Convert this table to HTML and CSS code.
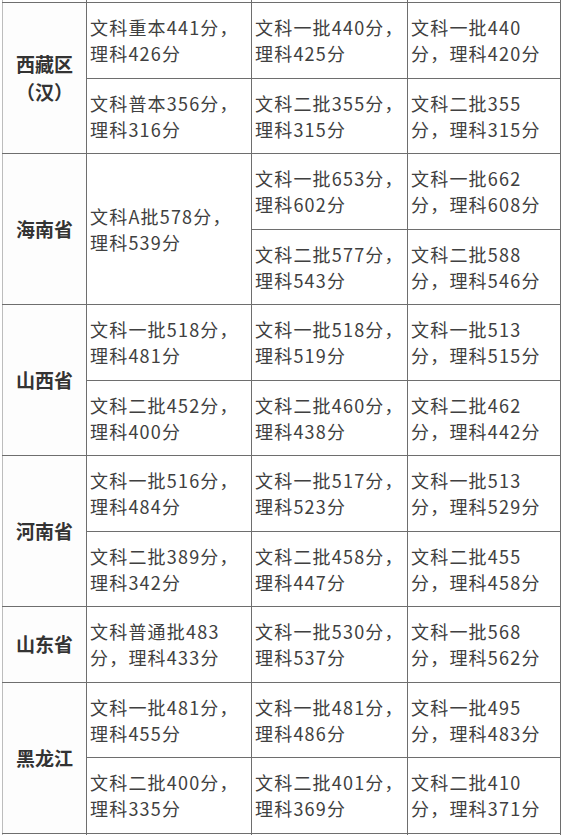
FILE: index.html
```html
<!DOCTYPE html>
<html lang="zh-CN">
<head>
<meta charset="utf-8">
<title>分数线</title>
<link rel="stylesheet" href="styles.css">
</head>
<body>
<table class="score">
  <colgroup>
    <col class="c1"><col class="c2"><col class="c3"><col class="c4">
  </colgroup>
  <tbody>
    <tr class="cut top"><td></td><td></td><td></td><td></td></tr>

    <tr class="r">
      <td class="p" rowspan="2">西藏区<br><span class="cm">（</span>汉<span class="cm">）</span></td>
      <td>文科重本441分<span class="cm">，</span><br>理科426分</td>
      <td>文科一批440分<span class="cm">，</span><br>理科425分</td>
      <td>文科一批440<br>分<span class="cm">，</span>理科420分</td>
    </tr>
    <tr class="r">
      <td>文科普本356分<span class="cm">，</span><br>理科316分</td>
      <td>文科二批355分<span class="cm">，</span><br>理科315分</td>
      <td>文科二批355<br>分<span class="cm">，</span>理科315分</td>
    </tr>

    <tr class="r">
      <td class="p" rowspan="2">海南省</td>
      <td rowspan="2">文科A批578分<span class="cm">，</span><br>理科539分</td>
      <td>文科一批653分<span class="cm">，</span><br>理科602分</td>
      <td>文科一批662<br>分<span class="cm">，</span>理科608分</td>
    </tr>
    <tr class="r">
      <td>文科二批577分<span class="cm">，</span><br>理科543分</td>
      <td>文科二批588<br>分<span class="cm">，</span>理科546分</td>
    </tr>

    <tr class="r">
      <td class="p" rowspan="2">山西省</td>
      <td>文科一批518分<span class="cm">，</span><br>理科481分</td>
      <td>文科一批518分<span class="cm">，</span><br>理科519分</td>
      <td>文科一批513<br>分<span class="cm">，</span>理科515分</td>
    </tr>
    <tr class="r">
      <td>文科二批452分<span class="cm">，</span><br>理科400分</td>
      <td>文科二批460分<span class="cm">，</span><br>理科438分</td>
      <td>文科二批462<br>分<span class="cm">，</span>理科442分</td>
    </tr>

    <tr class="r">
      <td class="p" rowspan="2">河南省</td>
      <td>文科一批516分<span class="cm">，</span><br>理科484分</td>
      <td>文科一批517分<span class="cm">，</span><br>理科523分</td>
      <td>文科一批513<br>分<span class="cm">，</span>理科529分</td>
    </tr>
    <tr class="r">
      <td>文科二批389分<span class="cm">，</span><br>理科342分</td>
      <td>文科二批458分<span class="cm">，</span><br>理科447分</td>
      <td>文科二批455<br>分<span class="cm">，</span>理科458分</td>
    </tr>

    <tr class="r">
      <td class="p">山东省</td>
      <td>文科普通批483<br>分<span class="cm">，</span>理科433分</td>
      <td>文科一批530分<span class="cm">，</span><br>理科537分</td>
      <td>文科一批568<br>分<span class="cm">，</span>理科562分</td>
    </tr>

    <tr class="r">
      <td class="p" rowspan="2">黑龙江</td>
      <td>文科一批481分<span class="cm">，</span><br>理科455分</td>
      <td>文科一批481分<span class="cm">，</span><br>理科486分</td>
      <td>文科一批495<br>分<span class="cm">，</span>理科483分</td>
    </tr>
    <tr class="r">
      <td>文科二批400分<span class="cm">，</span><br>理科335分</td>
      <td>文科二批401分<span class="cm">，</span><br>理科369分</td>
      <td>文科二批410<br>分<span class="cm">，</span>理科371分</td>
    </tr>

    <tr class="cut bottom"><td></td><td></td><td></td><td></td></tr>
  </tbody>
</table>
</body>
</html>
```

FILE: styles.css
```css
html, body {
  margin: 0;
  padding: 0;
  background: #ffffff;
}

body {
  font-family: "Noto Sans CJK SC", "Noto Sans", sans-serif;
  overflow: hidden;
}

.score {
  border-collapse: collapse;
  table-layout: fixed;
  width: 558px;
  margin-left: 2px;
}

.c1 { width: 84px; }
.c2 { width: 165px; }
.c3 { width: 156px; }
.c4 { width: 153px; }

.score td {
  border: 1px solid #6e6e6e;
  padding: 0 3px;
  font-size: 18px;
  letter-spacing: 1.2px;
  line-height: 26px;
  color: #404040;
  vertical-align: middle;
  white-space: nowrap;
}

.score td:first-child {
  border-left-color: #bdbdbd;
}

.score tr.r {
  height: 75.5px;
}

.score td.p {
  text-align: center;
  font-size: 19px;
  letter-spacing: 0;
  font-weight: bold;
  color: #333333;
  line-height: 28px;
  padding: 0;
  background: #fdfdfd;
}

.cm {
  font-family: "Noto Sans CJK TC", "Noto Sans CJK SC", sans-serif;
}

.score tr.cut td {
  padding: 0;
  height: 2px;
  line-height: 0;
  font-size: 0;
}

.score tr.top td {
  border-top: none;
}

.score tr.bottom td {
  border-bottom: none;
}
```
